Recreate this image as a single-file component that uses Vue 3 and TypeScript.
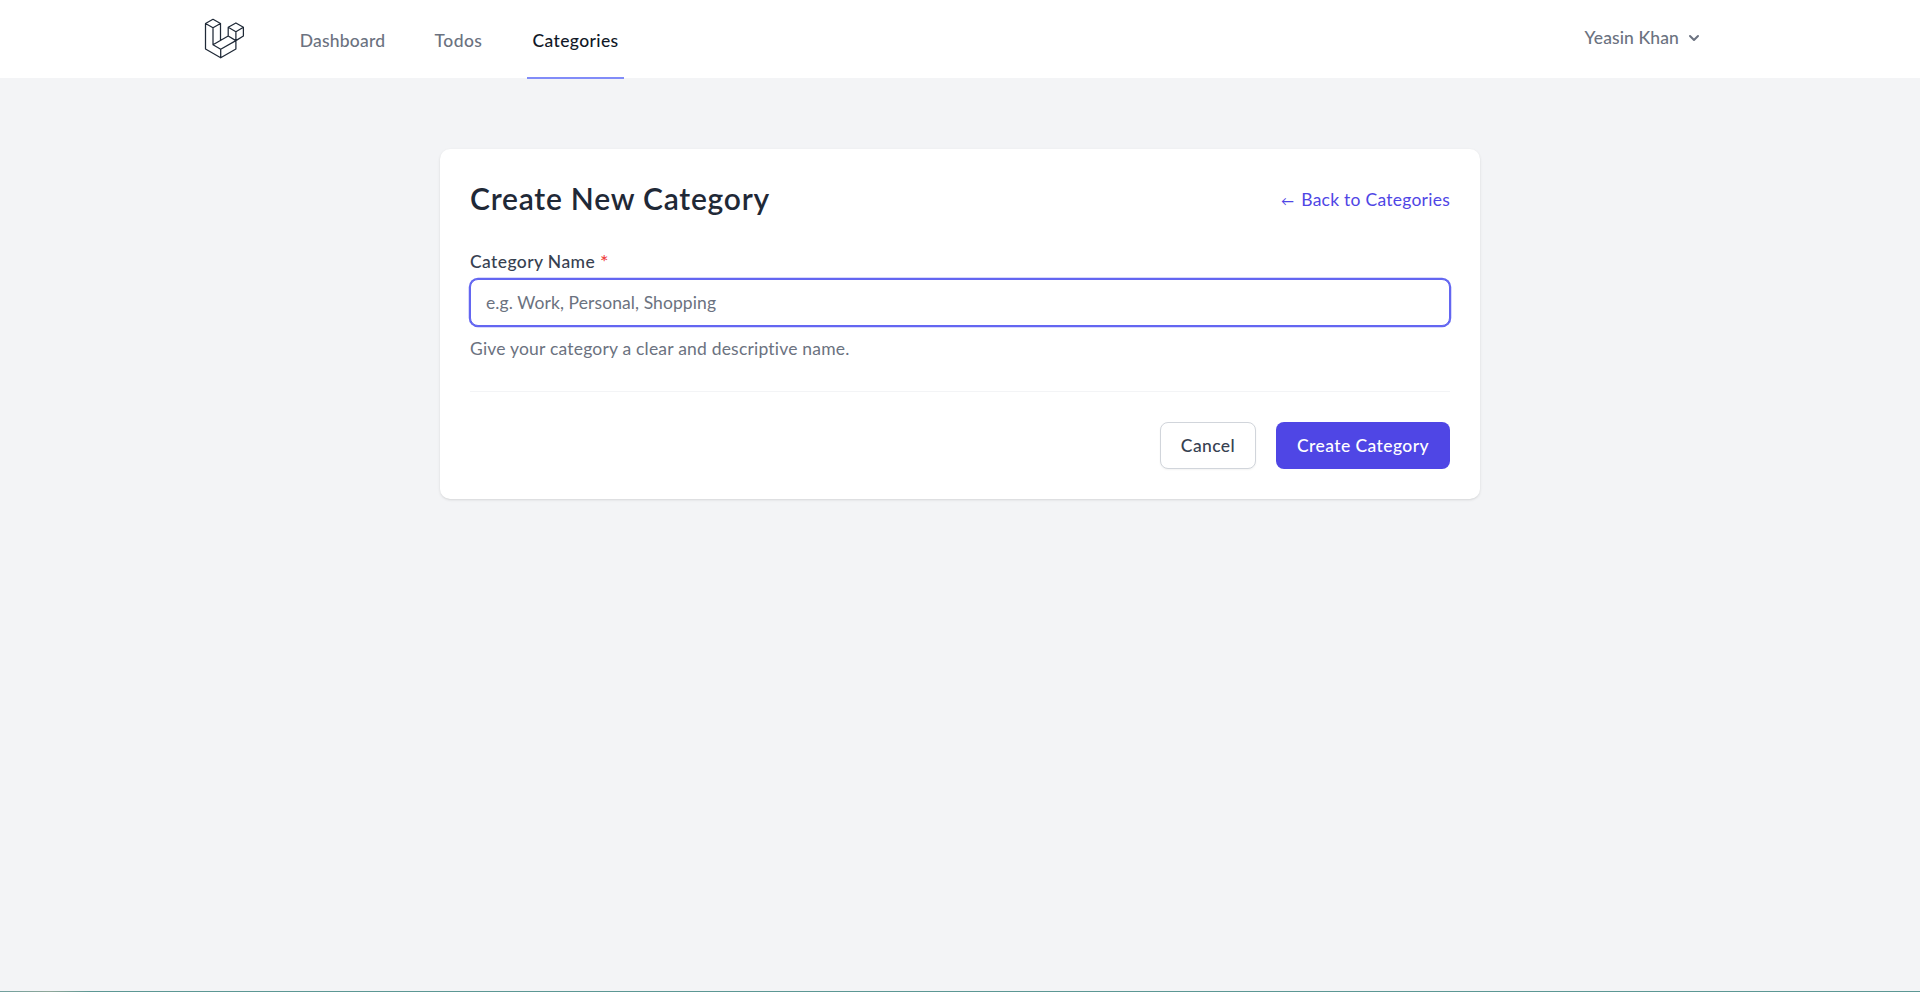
<script setup lang="ts">
interface NavItem {
  label: string
  key: string
  active?: boolean
}

const navItems: NavItem[] = [
  { label: 'Dashboard', key: 'dashboard' },
  { label: 'Todos', key: 'todos' },
  { label: 'Categories', key: 'categories', active: true },
]
</script>

<template>
  <div class="page">
    <nav class="navbar">
      <div class="nav-inner">
        <a class="brand" aria-label="Home">
          <svg width="42" height="42" viewBox="0 0 42 42" fill="none" stroke="#1f2937" stroke-width="1.25" stroke-linejoin="round" stroke-linecap="round">
            <path d="M1.5 5.5 9 1.3 16.5 5.5 9 9.7ZM1.5 5.5V31L16.7 39.8 31.9 31V22.6M9 9.7V26.8L16.7 31.2V39.8M16.5 5.5V22.3M9 26.8 24.2 18 31.9 22.6 16.7 31.2M24.2 9.3 31.9 5 39.4 9.3 31.9 13.7ZM24.2 9.3V18M39.4 9.3V18L31.9 22.6V13.7" />
          </svg>
        </a>
        <div class="links">
          <a v-for="item in navItems" :key="item.key" class="link" :class="[item.key, { active: item.active }]"><span>{{ item.label }}</span></a>
        </div>
        <button class="user" type="button">
          <span class="user-name">Yeasin Khan</span>
          <svg class="chevron" width="20" height="20" viewBox="0 0 20 20" fill="#6b7280">
            <path fill-rule="evenodd" clip-rule="evenodd" d="M5.293 7.293a1 1 0 011.414 0L10 10.586l3.293-3.293a1 1 0 111.414 1.414l-4 4a1 1 0 01-1.414 0l-4-4a1 1 0 010-1.414z" />
          </svg>
        </button>
      </div>
    </nav>

    <main class="card">
      <header class="card-head">
        <h2>Create New Category</h2>
        <a class="back"><span class="arrow">←</span><span class="back-text">Back to Categories</span></a>
      </header>
      <form @submit.prevent>
        <label for="name"><span class="label-text">Category Name</span><span class="star">*</span></label>
        <input id="name" type="text" placeholder="e.g. Work, Personal, Shopping" />
        <p class="hint">Give your category a clear and descriptive name.</p>
        <div class="actions">
          <button class="btn cancel" type="button">Cancel</button>
          <button class="btn create" type="submit">Create Category</button>
        </div>
      </form>
    </main>
    <div class="edge"></div>
  </div>
</template>

<style>
body {
  margin: 0;
  background: #f3f4f6;
}
</style>

<style scoped>
* {
  box-sizing: border-box;
}
.page {
  height: 992px;
  display: flex;
  flex-direction: column;
  overflow: hidden;
  background: #f3f4f6;
  font-family: Lato, "Open Sans", sans-serif;
  font-size: 17.5px;
  line-height: 25px;
  color: #1f2937;
}
.navbar {
  height: 78px;
  flex: none;
  background: #fff;
}
.nav-inner {
  height: 79px;
  padding: 0 216px 0 204px;
  display: flex;
  align-items: stretch;
}
.brand {
  padding-top: 18px;
}
.brand svg {
  display: block;
}
.links {
  display: flex;
  gap: 40px;
  margin-left: 49px;
}
.link {
  display: flex;
  align-items: center;
  justify-content: center;
  padding-top: 4px;
  border-bottom: 2px solid transparent;
  font-weight: 500;
  color: #6b7280;
  white-space: nowrap;
}
.dashboard {
  width: 95px;
  letter-spacing: 0.22px;
}
.todos {
  width: 57px;
  letter-spacing: 0.45px;
}
.categories {
  width: 97px;
  letter-spacing: 0.36px;
}
.link.active {
  color: #111827;
  border-color: #818cf8;
}
.user {
  margin-left: auto;
  padding: 0 0 4px;
  border: 0;
  background: none;
  display: flex;
  align-items: center;
  gap: 5px;
  font: inherit;
  font-weight: 500;
  letter-spacing: 0.11px;
  color: #6b7280;
}
.card {
  width: 1040px;
  height: 350px;
  margin: 71px auto 0;
  padding: 30px;
  background: #fff;
  border-radius: 10px;
  box-shadow: 0 1px 3px rgba(0, 0, 0, 0.1), 0 1px 2px -1px rgba(0, 0, 0, 0.1);
}
.card-head {
  display: flex;
  align-items: center;
  justify-content: space-between;
  height: 40px;
}
h2 {
  margin: 0;
  padding-bottom: 2px;
  font-size: 30px;
  font-weight: 600;
  line-height: 38px;
  letter-spacing: 0.77px;
}
.back {
  display: flex;
  gap: 7px;
  padding-top: 2px;
  color: #4f46e5;
  letter-spacing: 0.25px;
}
.arrow {
  padding-top: 2px;
  font-size: 13px;
}
label {
  display: flex;
  gap: 5px;
  margin-top: 30px;
  color: #374151;
  font-weight: 500;
}
.label-text {
  letter-spacing: 0.4px;
}
.star {
  color: #ef4444;
  font-size: 20px;
}
input {
  display: block;
  width: 100%;
  height: 47px;
  margin-top: 5px;
  padding: 0 15px;
  border: 1px solid #6366f1;
  border-radius: 8px;
  outline: none;
  box-shadow: 0 0 0 1.25px #6366f1;
  font: inherit;
  letter-spacing: 0.09px;
  background: #fff;
}
input::placeholder {
  color: #6b7280;
  opacity: 1;
}
.hint {
  margin: 10px 0 0;
  color: #6b7280;
  letter-spacing: 0.2px;
}
.actions {
  display: flex;
  justify-content: flex-end;
  gap: 20px;
  margin-top: 30px;
  padding-top: 30px;
  border-top: 1px solid #f3f4f6;
}
.btn {
  height: 47px;
  border-radius: 8px;
  font: inherit;
  font-weight: 500;
  letter-spacing: 0.4px;
  padding: 0;
  white-space: nowrap;
}
.cancel {
  width: 96px;
  background: #fff;
  border: 1px solid #d1d5db;
  color: #374151;
  box-shadow: 0 1px 2px rgba(0, 0, 0, 0.05);
}
.create {
  width: 174px;
  border: 0;
  background: #4f46e5;
  color: #fff;
}
.edge {
  height: 1px;
  margin-top: auto;
  background: linear-gradient(90deg, #6f9f9d 0, #8fa79a 50px, #5c9794 90px, #5c9794 100%);
}
</style>
